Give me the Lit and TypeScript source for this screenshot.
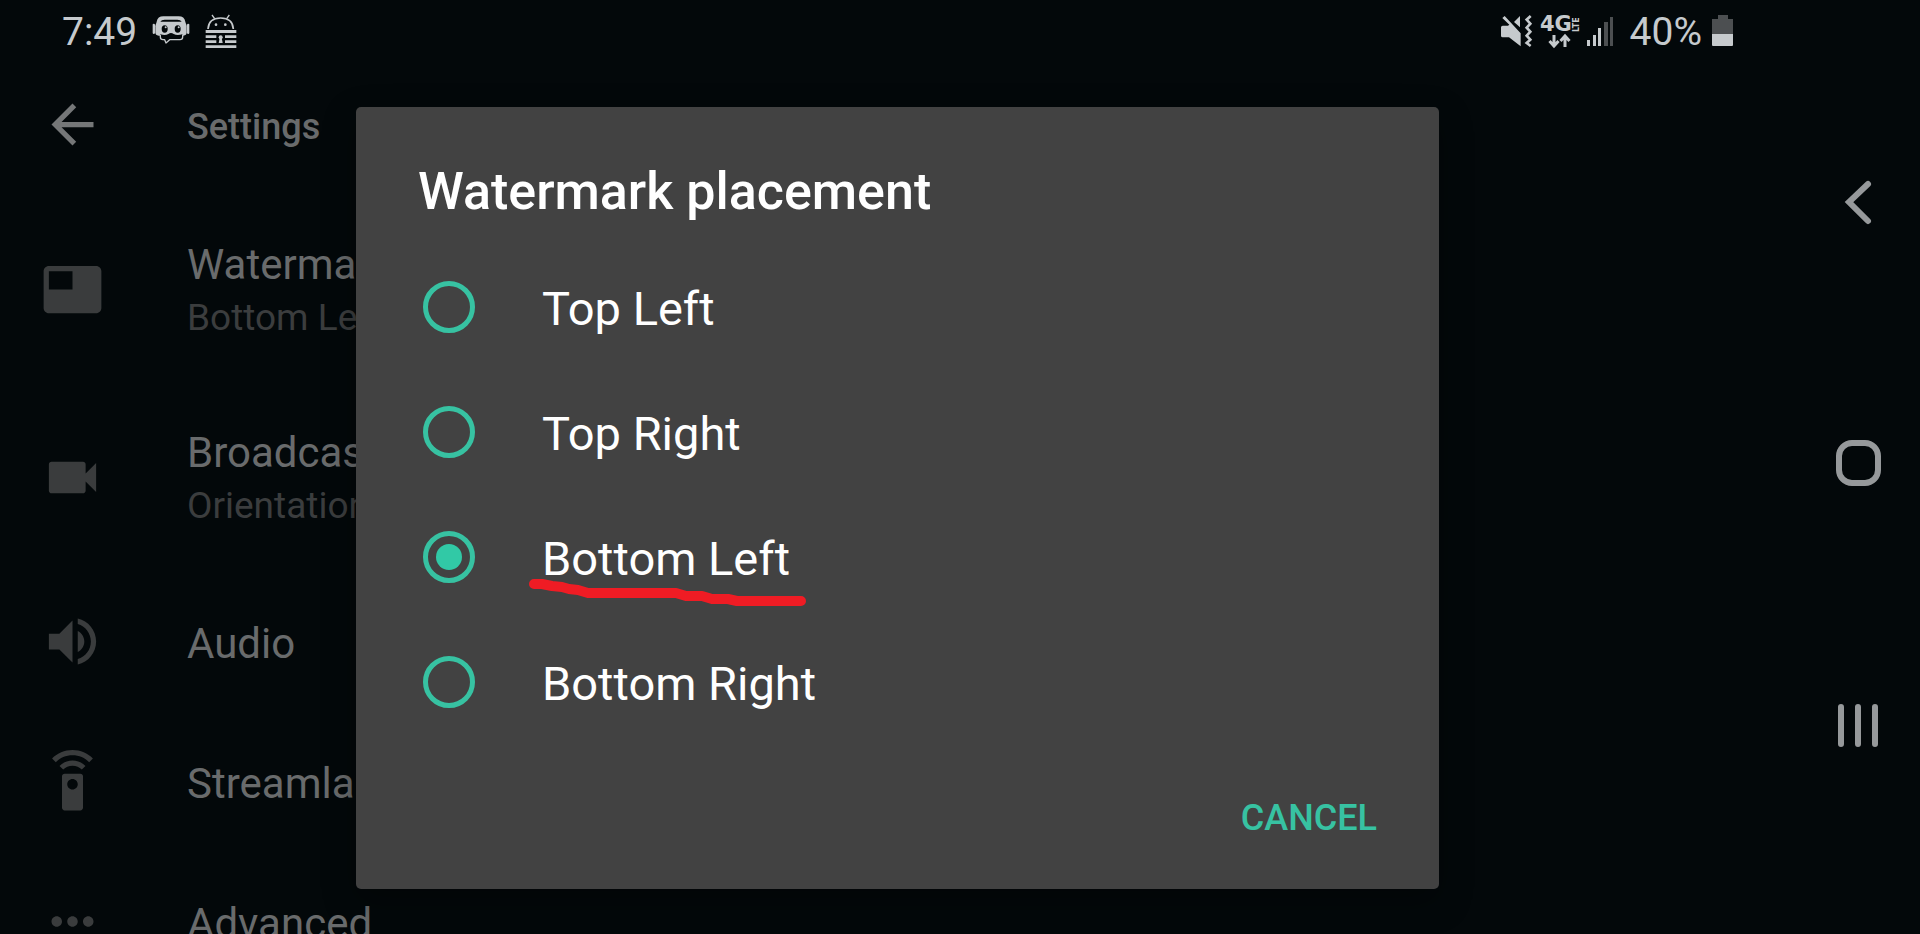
import { LitElement, html, svg, css, nothing } from "lit";
import { customElement, property, state } from "lit/decorators.js";

interface Row {
  icon: unknown;
  title: string;
  detail?: string;
}

const icons = {
  arrow: svg`<path d="M20 11H7.83l5.59-5.59L12 4l-8 8 8 8 1.41-1.41L7.83 13H20v-2z"/>`,
  featured: svg`<path fill-rule="evenodd" d="M21 3H3c-1.100 0-2 .9-2 2v14c0 1.100.9 2 2 2h18c1.100 0 2-.9 2-2V5c0-1.100-.9-2-2-2zM12 12H3V5h9v7z"/>`,
  videocam: svg`<path d="M17 10.500V7c0-.55-.45-1-1-1H4c-.55 0-1 .45-1 1v10c0 .55.45 1 1 1h12c.55 0 1-.45 1-1v-3.500l4 4v-11l-4 4z"/>`,
  volume: svg`<path d="M3 9v6h4l5 5V4L7 9H3zm13.500 3c0-1.770-1.020-3.290-2.500-4.030v8.050c1.480-.73 2.500-2.250 2.500-4.020zM14 3.230v2.060c2.890.86 5 3.540 5 6.710s-2.110 5.850-5 6.710v2.060c4.010-.91 7-4.490 7-8.770s-2.990-7.860-7-8.770z"/>`,
  remote: svg`<path fill-rule="evenodd" d="M15 9H9c-.55 0-1 .45-1 1v12c0 .55.45 1 1 1h6c.55 0 1-.45 1-1V10c0-.55-.45-1-1-1zm-3 6c-1.100 0-2-.9-2-2s.9-2 2-2 2 .9 2 2-.9 2-2 2zM7.050 6.050l1.410 1.410C9.370 6.560 10.620 6 12 6s2.630.56 3.540 1.460l1.410-1.410C15.680 4.780 13.930 4 12 4s-3.680.78-4.950 2.050zM12 0C8.960 0 6.210 1.230 4.220 3.220l1.410 1.410C7.260 3.010 9.510 2 12 2s4.740 1.010 6.360 2.640l1.410-1.410C17.790 1.230 15.040 0 12 0z"/>`,
  more: svg`<path d="M6 10c-1.100 0-2 .9-2 2s.9 2 2 2 2-.9 2-2-.9-2-2-2zm12 0c-1.100 0-2 .9-2 2s.9 2 2 2 2-.9 2-2-.9-2-2-2zm-6 0c-1.100 0-2 .9-2 2s.9 2 2 2 2-.9 2-2-.9-2-2-2z"/>`,
};

const rows: Row[] = [
  { icon: icons.featured, title: "Watermark", detail: "Bottom Left" },
  { icon: icons.videocam, title: "Broadcast", detail: "Orientation" },
  { icon: icons.volume, title: "Audio" },
  { icon: icons.remote, title: "Streamlabs" },
  { icon: icons.more, title: "Advanced" },
];

@customElement("status-bar")
class StatusBar extends LitElement {
  static styles = css`
    :host {
      display: flex;
      justify-content: space-between;
      align-items: center;
      color: #c6cacd;
      font-size: 39px;
      line-height: 46px;
    }
    .group {
      display: flex;
      align-items: center;
    }
    .left {
      gap: 15px;
    }
    .right {
      gap: 7px;
    }
    time,
    .level {
      padding-top: 2px;
    }
    .level {
      margin: 0 3px 0 9px;
    }
    svg {
      display: block;
      fill: currentColor;
      overflow: visible;
    }
    .net {
      font-family: "DejaVu Sans", sans-serif;
      font-weight: 700;
    }
    .gen {
      font-size: 21px;
    }
    .lte {
      font-size: 8px;
    }
    .dim {
      fill: #4c4f51;
    }
    .ink {
      fill: #03080a;
    }
    .line {
      fill: none;
      stroke: currentColor;
    }
  `;

  render() {
    return html`
      <div class="group left">
        <time>7:49</time>
        <svg width="38" height="32" viewBox="0 0 114 96" aria-hidden="true">
          <path d="M14 20Q17 4 34 4H80Q97 4 100 20L102 28H12z" />
          <path class="ink" d="M25 20Q28 14 38 14H76Q86 14 89 20z" />
          <rect x="10" y="24" width="94" height="38" rx="10" />
          <rect x="2" y="26" width="7" height="31" rx="3.500" />
          <rect x="105" y="26" width="7" height="31" rx="3.500" />
          <ellipse class="ink" cx="38" cy="42" rx="9" ry="11" />
          <ellipse class="ink" cx="77" cy="42" rx="9" ry="11" />
          <circle cx="41" cy="37" r="3" />
          <circle cx="80" cy="37" r="3" />
          <path class="ink" d="M25 71V58Q40 63 49 57Q57 51 65 57Q75 63 91 58V71z" />
          <path class="line" stroke-width="4" stroke-linejoin="round"
            d="M25 60V66Q25 74 33 74H38L42 84L53 74H84Q92 74 92 66V60" />
        </svg>
        <svg width="32" height="36" viewBox="0 0 96 108" aria-hidden="true">
          <path class="line" stroke-width="4" d="M21 6L29 17M73 6L65 17" />
          <path class="line" stroke-width="5" d="M9 48Q11 15 47 15T85 48" />
          <circle cx="33" cy="35" r="4" />
          <circle cx="61" cy="35" r="4" />
          <path d="M2 51H94V60H2zM2 67H34V75H2zM60 67H94V75H60zM2 82H34V90H2zM60 82H94V90H60zM2 97H94V105H2z" />
          <circle cx="47" cy="73" r="6" />
          <path d="M44 74H50L53 90H41z" />
        </svg>
      </div>
      <div class="group right">
        <svg width="33" height="34" viewBox="0 0 99 102" aria-hidden="true">
          <path d="M7 12L14 6L62 58V97L27 70H8Q3 70 3 65V40Q3 35 8 35H24L28 32z" />
          <path d="M42 24L60 6V40z" />
          <path class="line" stroke-width="8" d="M92 6L80 17L91 29L80 41L91 53L80 65L91 77L80 87L92 96" />
        </svg>
        <svg class="net" width="39" height="34" viewBox="0 0 39 34" role="img" aria-label="4G LTE">
          <text class="gen" x="0" y="17">4G</text>
          <text class="lte" transform="translate(39 18) rotate(-90)">LTE</text>
          <path class="line" stroke-width="3" d="M14 21V32M9.500 27L14 32L18.500 27M25 33V22M20.500 27L25 22L29.500 27" />
        </svg>
        <svg width="28" height="34" viewBox="0 0 28 34" aria-hidden="true">
          <path d="M1 26h3v6H1zM7 21h3v11H7zM12 14h3v18h-3z" />
          <path class="dim" d="M18 8h4v24h-4zM24 3h3v29h-3z" />
        </svg>
        <span class="level">40%</span>
        <svg width="22" height="34" viewBox="0 0 22 34" aria-hidden="true">
          <path class="dim" d="M6 1h10v4h5v16H0V5h6z" />
          <path d="M0 20h21v11a1 1 0 0 1-1 1H1a1 1 0 0 1-1-1z" />
        </svg>
      </div>
    `;
  }
}

@customElement("settings-list")
class SettingsList extends LitElement {
  static styles = css`
    :host {
      display: block;
      color: #696b6c;
    }
    .bar,
    .row {
      display: grid;
      grid-template-columns: 145px 1fr;
      gap: 42px;
      align-items: center;
    }
    .bar {
      height: 133px;
      padding-bottom: 8px;
      box-sizing: border-box;
    }
    h1 {
      margin: 0;
      padding-top: 4px;
      font-size: 36px;
      line-height: 44px;
      font-weight: 500;
    }
    .back {
      justify-self: center;
      padding: 0;
      border: 0;
      background: none;
      color: #757778;
    }
    ul {
      margin: 0;
      padding: 0;
      list-style: none;
    }
    .row {
      height: 140px;
    }
    .row.tall {
      height: 188px;
    }
    svg {
      display: block;
      justify-self: center;
      width: 63px;
      height: 63px;
      fill: currentColor;
    }
    .row svg {
      color: #3a3c3d;
    }
    .text {
      display: grid;
      gap: 3px;
      padding-top: 5px;
    }
    .title {
      font-size: 42px;
      line-height: 50px;
    }
    .detail {
      font-size: 37px;
      line-height: 50px;
      color: #3b3d3e;
    }
  `;

  render() {
    return html`
      <header class="bar">
        <button class="back" aria-label="Back">
          <svg viewBox="0 0 24 24">${icons.arrow}</svg>
        </button>
        <h1>Settings</h1>
      </header>
      <ul>
        ${rows.map(
          (row) => html`
            <li class="row ${row.detail ? "tall" : ""}">
              <svg viewBox="0 0 24 24" aria-hidden="true">${row.icon}</svg>
              <div class="text">
                <span class="title">${row.title}</span>
                ${row.detail ? html`<span class="detail">${row.detail}</span>` : nothing}
              </div>
            </li>
          `
        )}
      </ul>
    `;
  }
}

@customElement("choice-dialog")
class ChoiceDialog extends LitElement {
  @property() heading = "";
  @property({ attribute: false }) options: string[] = [];
  @property() marked = "";
  @state() private selected = "Bottom Left";

  static styles = css`
    :host {
      display: block;
      width: min(1083px, 92%);
      border-radius: 5px;
      background: #424242;
      color: #fff;
      box-shadow: 0 12px 32px rgba(0, 0, 0, 0.35);
    }
    .panel {
      padding: 54px 48px 37px 62px;
    }
    h2 {
      margin: 0 0 21px;
      font-size: 52px;
      line-height: 62px;
      font-weight: 500;
    }
    fieldset {
      margin: 0;
      padding: 0 0 0 5px;
      border: 0;
    }
    .option {
      display: flex;
      align-items: center;
      gap: 67px;
      height: 125px;
      font-size: 47px;
      line-height: 56px;
    }
    input {
      display: grid;
      place-items: center;
      appearance: none;
      width: 52px;
      height: 52px;
      margin: 0;
      border: 5px solid #37c2a2;
      border-radius: 50%;
    }
    input:checked::before {
      content: "";
      width: 26px;
      height: 26px;
      border-radius: 50%;
      background: #31c9a6;
    }
    .label {
      position: relative;
      padding-top: 4px;
    }
    .stroke {
      position: absolute;
      left: -13px;
      top: 52px;
      fill: none;
      stroke: #ef1c24;
      stroke-width: 10px;
      stroke-linecap: round;
      stroke-linejoin: round;
    }
    .actions {
      display: flex;
      justify-content: flex-end;
      padding-top: 40px;
    }
    .actions button {
      padding: 12px 14px;
      border: 0;
      background: none;
      color: #37c2a2;
      font: inherit;
      font-size: 36px;
      line-height: 44px;
      font-weight: 500;
    }
  `;

  render() {
    return html`
      <div class="panel" role="dialog" aria-labelledby="heading">
        <h2 id="heading">${this.heading}</h2>
        <fieldset aria-labelledby="heading">
          ${this.options.map(
            (option) => html`
              <label class="option">
                <input
                  type="radio"
                  name="choice"
                  .checked=${option === this.selected}
                  @change=${() => (this.selected = option)}
                />
                <span class="label">
                  ${option}
                  ${option === this.marked
                    ? html`<svg class="stroke" width="280" height="30" viewBox="0 0 280 30" aria-hidden="true">
                        <path d="M5 5H13L23 7L33 8L40 10L49 11L59 14H147L157 17H173L183 20H199L208 22H272" />
                      </svg>`
                    : nothing}
                </span>
              </label>
            `
          )}
        </fieldset>
        <div class="actions"><button>CANCEL</button></div>
      </div>
    `;
  }
}

@customElement("app-root")
class AppRoot extends LitElement {
  static styles = css`
    :host {
      display: grid;
      grid-template-columns: 1fr 125px;
      height: 100vh;
      overflow: hidden;
      background: #03080a;
      font-family: Roboto, sans-serif;
    }
    .screen {
      position: relative;
      display: grid;
      grid-template-rows: 62px 1fr;
      min-height: 0;
    }
    status-bar {
      padding: 0 61px 0 62px;
    }
    .scrim {
      position: absolute;
      inset: 62px 0 0;
      display: grid;
      place-items: center;
    }
    .keys {
      display: flex;
      flex-direction: column;
      align-items: center;
      justify-content: center;
      gap: 182px;
      padding-bottom: 8px;
    }
    .keys button {
      width: 80px;
      height: 80px;
      padding: 0;
      border: 0;
      background: none;
      color: #96999b;
    }
    .keys svg {
      display: block;
      fill: none;
      stroke: currentColor;
      stroke-width: 6px;
      stroke-linecap: round;
    }
  `;

  render() {
    return html`
      <main class="screen">
        <status-bar></status-bar>
        <settings-list></settings-list>
        <div class="scrim">
          <choice-dialog
            heading="Watermark placement"
            .options=${["Top Left", "Top Right", "Bottom Left", "Bottom Right"]}
            marked="Bottom Left"
          ></choice-dialog>
        </div>
      </main>
      <nav class="keys">
        <button aria-label="Back">
          <svg viewBox="0 0 80 80"><path d="M50 23L31 41L50 60" /></svg>
        </button>
        <button aria-label="Home">
          <svg viewBox="0 0 80 80"><rect x="21" y="20" width="39" height="40" rx="13" /></svg>
        </button>
        <button aria-label="Recents">
          <svg viewBox="0 0 80 80"><path d="M23 22V59M40 22V59M57 22V59" /></svg>
        </button>
      </nav>
    `;
  }
}
